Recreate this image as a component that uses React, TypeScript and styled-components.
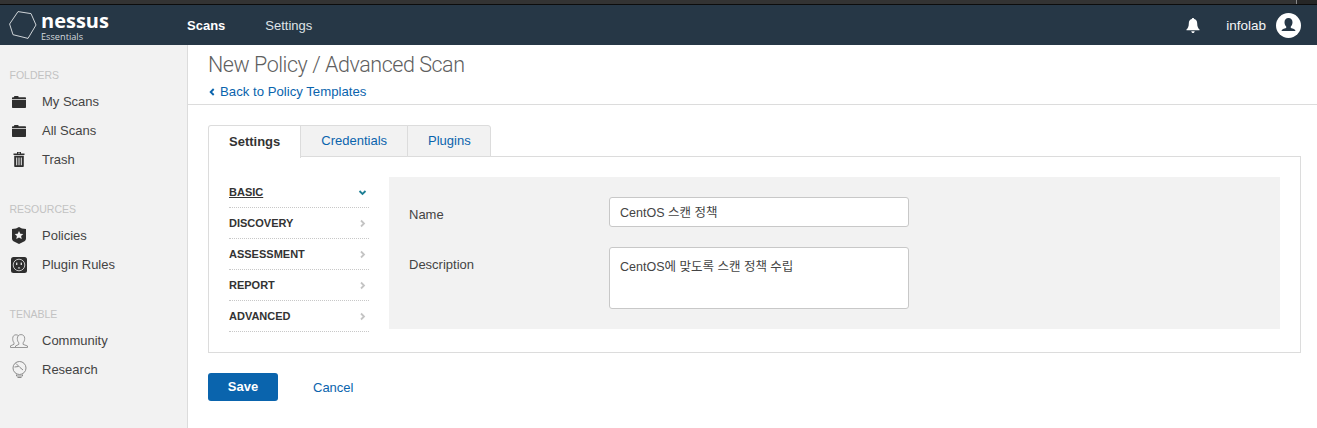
import React from "react";
import styled, { createGlobalStyle } from "styled-components";

const FolderIcon = () => (
  <svg width="14" height="12" viewBox="0 0 14 12">
    <path d="M0 2.2C0 1.6.4 1.2 1 1.2h1V.8C2 .3 2.3 0 2.8 0h3c.5 0 .8.3.8.8v.4H13c.6 0 1 .4 1 1V3H0zM0 3.8h14V11c0 .6-.4 1-1 1H1c-.6 0-1-.4-1-1z" fill="#2f2f2f" />
  </svg>
);

const TrashIcon = () => (
  <svg width="12" height="15" viewBox="0 0 12 15">
    <path d="M4 0h4v1.5h3.5V3H.5V1.5H4zM5 .8v.7h2V.8z" fill="#2f2f2f" fillRule="evenodd" />
    <path d="M1.2 3.8h9.6V14c0 .6-.4 1-1 1H2.2c-.6 0-1-.4-1-1zM3.2 5.5v7.8h1V5.500zM5.500 5.500v7.800h1V5.500zM7.800 5.500v7.800h1V5.500z" fill="#2f2f2f" fillRule="evenodd" />
  </svg>
);

const ShieldIcon = () => (
  <svg width="14" height="17" viewBox="0 0 14 17">
    <path d="M7 0l3 1.500 4 .5v9.500c0 1.500-1 2.500-2.500 3.300L7 17l-4.500-2.200C1 14 0 13 0 11.500V2l4-.5z" fill="#2f2f2f" />
    <path d="M7 4l1.300 2.700 3 .3-2.200 2 .6 3L7 10.500l-2.700 1.500.6-3-2.200-2 3-.3z" fill="#f2f2f2" />
  </svg>
);

const PluginIcon = () => (
  <svg width="16" height="16" viewBox="0 0 16 16">
    <rect width="16" height="16" rx="2.500" fill="#2f2f2f" />
    <circle cx="8" cy="8" r="5.800" fill="none" stroke="#d8d8d8" strokeWidth="0.900" />
    <rect x="5" y="5.600" width="1.400" height="2.400" fill="#d8d8d8" />
    <rect x="9.600" y="5.600" width="1.400" height="2.400" fill="#d8d8d8" />
    <path d="M6.800 11.500c0-1.800 2.400-1.800 2.400 0z" fill="#d8d8d8" />
  </svg>
);

const CommunityIcon = () => (
  <svg width="18" height="14" viewBox="0 0 18 14" fill="none" stroke="#808080" strokeWidth="0.800">
    <path d="M.5 13.500v-1.700L4 10.300V8.800C3 7.800 2.700 6 2.700 4.500 2.700 2 4.200.8 6 .8c1 0 1.800.3 2.400 1" />
    <path d="M5.500 13.500V12l3.300-1.600V8.800C7.800 7.800 7.300 6.200 7.300 4.300 7.300 2 9 .6 11 .6s3.700 1.400 3.700 3.700c0 1.900-.6 3.500-1.600 4.500v1.600l4.400 1.600v1.500z" />
    <path d="M.5 13.500h5" />
  </svg>
);

const BulbIcon = () => (
  <svg width="15" height="18" viewBox="0 0 15 18" fill="none" stroke="#808080" strokeWidth="0.900">
    <circle cx="7.500" cy="7" r="6.500" />
    <path d="M4.500 13.500v1.500h6v-1.500M5.500 16.500h4" />
    <path d="M4 2.500l4 4 3 2.500M2.500 6l4-.5" />
  </svg>
);

const BellIcon = () => (
  <svg width="14" height="15" viewBox="0 0 14 15">
    <path d="M7 0c.7 0 1.100.4 1.100 1 2.100.5 3.100 2.200 3.100 4.400 0 3 .8 4.600 2.300 6 .3.400.1.900-.4.900H.9c-.5 0-.7-.5-.4-.9 1.500-1.400 2.300-3 2.300-6C2.800 3.200 3.800 1.500 5.900 1 5.900.4 6.300 0 7 0z" fill="#fff" />
    <path d="M5.300 13.200h3.400C8.600 14.300 7.900 15 7 15s-1.600-.7-1.700-1.800z" fill="#fff" />
  </svg>
);

const AvatarIcon = () => (
  <svg width="25" height="25" viewBox="0 0 25 25">
    <circle cx="12.500" cy="12.500" r="12.500" fill="#fff" />
    <path d="M12.500 5c2.500 0 4 1.800 4 4.300 0 1.800-.7 3.400-1.700 4.300v1.300c2.200.6 4.700 1.300 4.700 3.100H5.500c0-1.800 2.500-2.500 4.700-3.100v-1.300c-1-.9-1.700-2.500-1.700-4.300C8.500 6.800 10 5 12.500 5z" fill="#263746" />
  </svg>
);

const HexLogo = () => (
  <svg width="28" height="28" viewBox="0 0 28 28" fill="none" stroke="#e2e5e8" strokeWidth="0.900">
    <path d="M9 .6l13 2 5 11.400-8 13.400-15-3.700L.6 13z" />
  </svg>
);

const Chevron = ({ open }: { open?: boolean }) => (
  <svg width="9" height="9" viewBox="0 0 9 9" fill="none" strokeWidth="1.800" stroke={open ? "#1f7f95" : "#c4c4c4"}>
    <path d={open ? "M1.500 3l3 3 3-3" : "M3 1.500l3 3-3 3"} />
  </svg>
);

const BackChevron = () => (
  <svg width="6" height="8" viewBox="0 0 6 8" fill="none" stroke="#0a64ad" strokeWidth="1.900">
    <path d="M4.700 1L1.700 4l3 3" />
  </svg>
);

const sideSections = [
  {
    title: "FOLDERS",
    items: [
      { label: "My Scans", icon: <FolderIcon /> },
      { label: "All Scans", icon: <FolderIcon /> },
      { label: "Trash", icon: <TrashIcon /> },
    ],
  },
  {
    title: "RESOURCES",
    items: [
      { label: "Policies", icon: <ShieldIcon /> },
      { label: "Plugin Rules", icon: <PluginIcon /> },
    ],
  },
  {
    title: "TENABLE",
    items: [
      { label: "Community", icon: <CommunityIcon /> },
      { label: "Research", icon: <BulbIcon /> },
    ],
  },
];

const policyMenu = ["BASIC", "DISCOVERY", "ASSESSMENT", "REPORT", "ADVANCED"];

const App = () => {
  return (
    <>
      <GlobalStyle />
      <Page>
        <TopStrip>
          <TopStripEnd />
        </TopStrip>
        <Header>
          <Logo>
            <HexLogo />
            <LogoText>
              <LogoName>nessus</LogoName>
              <LogoEdition>Essentials</LogoEdition>
            </LogoText>
          </Logo>
          <NavLink $active>Scans</NavLink>
          <NavLink>Settings</NavLink>
          <UserArea>
            <BellIcon />
            <UserName>infolab</UserName>
            <AvatarIcon />
          </UserArea>
        </Header>
        <Body>
          <Sidebar>
            {sideSections.map((section) => (
              <SideSection key={section.title}>
                <SideTitle>{section.title}</SideTitle>
                {section.items.map((item) => (
                  <SideItem key={item.label}>
                    <SideIcon>{item.icon}</SideIcon>
                    {item.label}
                  </SideItem>
                ))}
              </SideSection>
            ))}
          </Sidebar>
          <Main>
            <TitleBar>
              <Title>New Policy / Advanced Scan</Title>
              <BackLink>
                <BackChevron />
                Back to Policy Templates
              </BackLink>
            </TitleBar>
            <Content>
              <Tabs>
                <Tab $active>Settings</Tab>
                <Tab>Credentials</Tab>
                <Tab>Plugins</Tab>
              </Tabs>
              <Panel>
                <PolicyMenu>
                  {policyMenu.map((name, i) => (
                    <PolicyMenuItem key={name}>
                      <PolicyMenuLabel $active={i === 0}>{name}</PolicyMenuLabel>
                      <Chevron open={i === 0} />
                    </PolicyMenuItem>
                  ))}
                </PolicyMenu>
                <FormArea>
                  <FormRow>
                    <FormLabel>Name</FormLabel>
                    <NameInput readOnly value="CentOS 스캔 정책" />
                  </FormRow>
                  <FormRow>
                    <FormLabel>Description</FormLabel>
                    <DescriptionInput readOnly value="CentOS에 맞도록 스캔 정책 수립" />
                  </FormRow>
                </FormArea>
              </Panel>
              <Actions>
                <SaveButton>Save</SaveButton>
                <CancelLink>Cancel</CancelLink>
              </Actions>
            </Content>
          </Main>
        </Body>
      </Page>
    </>
  );
};

export default App;

const fontStack = `"Liberation Sans", "Noto Sans CJK KR", Arial, sans-serif`;

const GlobalStyle = createGlobalStyle`
  html, body {
    margin: 0;
    padding: 0;
    background: #fff;
    font-family: ${fontStack};
  }
  * {
    box-sizing: border-box;
  }
`;

const Page = styled.div`
  display: flex;
  flex-direction: column;
  width: 1317px;
  height: 428px;
  overflow: hidden;
`;

const TopStrip = styled.div`
  display: flex;
  justify-content: flex-end;
  height: 5px;
  background-color: #333;
  border-bottom: 1px solid #0c0c0c;
`;

const TopStripEnd = styled.div`
  width: 21px;
  background-color: #262626;
  border-left: 1px solid #8a8a8a;
`;

const Header = styled.header`
  display: flex;
  align-items: center;
  height: 40px;
  padding: 0 16px 0 9px;
  background-color: #263746;
  color: #fff;
`;

const Logo = styled.div`
  display: flex;
  align-items: center;
  gap: 4px;
  width: 178px;
`;

const LogoText = styled.div`
  display: flex;
  flex-direction: column;
  margin-top: 3px;
`;

const LogoName = styled.span`
  font-family: "Open Sans", sans-serif;
  font-size: 20px;
  font-weight: 700;
  line-height: 18px;
`;

const LogoEdition = styled.span`
  margin-top: 2px;
  font-family: "Open Sans", sans-serif;
  font-size: 9.200px;
  line-height: 10px;
  color: #d4d9dd;
`;

const NavLink = styled.a<{ $active?: boolean }>`
  margin-right: 40px;
  font-size: 13px;
  font-weight: ${(p) => (p.$active ? 700 : 400)};
  color: ${(p) => (p.$active ? "#fff" : "#dfe3e6")};
`;

const UserArea = styled.div`
  display: flex;
  align-items: center;
  margin-left: auto;
`;

const UserName = styled.span`
  margin: 0 10px 0 26px;
  font-size: 13.500px;
  color: #f4f5f6;
`;

const Body = styled.div`
  display: flex;
  flex: 1;
  min-height: 0;
`;

const Sidebar = styled.aside`
  width: 188px;
  padding-top: 24px;
  background-color: #f2f2f2;
  border-right: 1px solid #dcdcdc;
`;

const SideSection = styled.div`
  margin-bottom: 29px;
`;

const SideTitle = styled.div`
  height: 12px;
  margin-bottom: 6px;
  padding-left: 9.500px;
  font-size: 10.500px;
  line-height: 12px;
  color: #c2c2c2;
`;

const SideItem = styled.div`
  display: flex;
  align-items: center;
  height: 29px;
  font-size: 13px;
  color: #444;
`;

const SideIcon = styled.span`
  display: flex;
  justify-content: center;
  align-items: center;
  width: 30px;
  margin: 0 8px 0 4px;
`;

const Main = styled.main`
  flex: 1;
  min-width: 0;
`;

const TitleBar = styled.div`
  height: 60px;
  padding: 7px 20px 0;
  border-bottom: 1px solid #dcdcdc;
`;

const Title = styled.h1`
  margin: 0;
  font-family: Roboto, sans-serif;
  font-size: 21.500px;
  font-weight: 300;
  line-height: 26px;
  letter-spacing: -0.460px;
  color: #5f5f5f;
`;

const BackLink = styled.a`
  display: flex;
  align-items: center;
  gap: 5px;
  margin-top: 6px;
  padding-left: 1px;
  font-size: 13.200px;
  line-height: 16px;
  color: #0a64ad;
`;

const Content = styled.div`
  padding: 20px 16px 0 20px;
`;

const Tabs = styled.div`
  display: flex;
  height: 32px;
`;

const Tab = styled.div<{ $active?: boolean }>`
  position: relative;
  z-index: ${(p) => (p.$active ? 1 : 0)};
  display: flex;
  justify-content: center;
  align-items: center;
  height: ${(p) => (p.$active ? "33px" : "32px")};
  margin-right: -1px;
  padding: 0 20px 2px;
  font-size: 13px;
  font-weight: ${(p) => (p.$active ? 700 : 400)};
  color: ${(p) => (p.$active ? "#333" : "#0a64ad")};
  background-color: ${(p) => (p.$active ? "#fff" : "#f2f2f2")};
  border: 1px solid #dcdcdc;
  border-bottom: ${(p) => (p.$active ? "0" : "1px solid #dcdcdc")};
  &:first-child {
    border-top-left-radius: 3px;
  }
  &:last-child {
    padding-right: 19px;
    border-top-right-radius: 3px;
  }
`;

const Panel = styled.div`
  display: flex;
  height: 197px;
  margin-top: -1px;
  padding: 20px 20px 0;
  border: 1px solid #dcdcdc;
`;

const PolicyMenu = styled.div`
  width: 140px;
  margin-right: 20px;
`;

const PolicyMenuItem = styled.div`
  display: flex;
  justify-content: space-between;
  align-items: center;
  height: 31px;
  padding-right: 2px;
  border-bottom: 1px dotted #c8c8c8;
`;

const PolicyMenuLabel = styled.span<{ $active?: boolean }>`
  font-size: 11px;
  font-weight: 700;
  color: #333;
  text-decoration: ${(p) => (p.$active ? "underline" : "none")};
`;

const FormArea = styled.div`
  flex: 1;
  height: 152px;
  padding: 20px;
  background-color: #f2f2f2;
`;

const FormRow = styled.div`
  display: flex;
  align-items: flex-start;
  margin-bottom: 20px;
`;

const FormLabel = styled.label`
  width: 200px;
  padding-top: 10px;
  font-size: 13px;
  line-height: 15px;
  color: #444;
`;

const NameInput = styled.input`
  width: 300px;
  height: 30px;
  padding: 0 10px 2px;
  font-family: ${fontStack};
  font-size: 12.500px;
  color: #444;
  background: #fff;
  border: 1px solid #c8c8c8;
  border-radius: 3px;
  outline: none;
`;

const DescriptionInput = styled.textarea`
  width: 300px;
  height: 62px;
  padding: 11px 10px 10px;
  font-family: ${fontStack};
  font-size: 12.500px;
  line-height: 16px;
  color: #444;
  background: #fff;
  border: 1px solid #c8c8c8;
  border-radius: 3px;
  outline: none;
  resize: none;
`;

const Actions = styled.div`
  display: flex;
  align-items: center;
  margin-top: 20px;
`;

const SaveButton = styled.button`
  width: 70px;
  height: 28px;
  padding: 0 0 2px;
  font-family: ${fontStack};
  font-size: 13px;
  font-weight: 700;
  color: #fff;
  background-color: #0a64ad;
  border: 0;
  border-radius: 3px;
`;

const CancelLink = styled.a`
  margin-left: 35px;
  font-size: 13px;
  color: #0a64ad;
`;
